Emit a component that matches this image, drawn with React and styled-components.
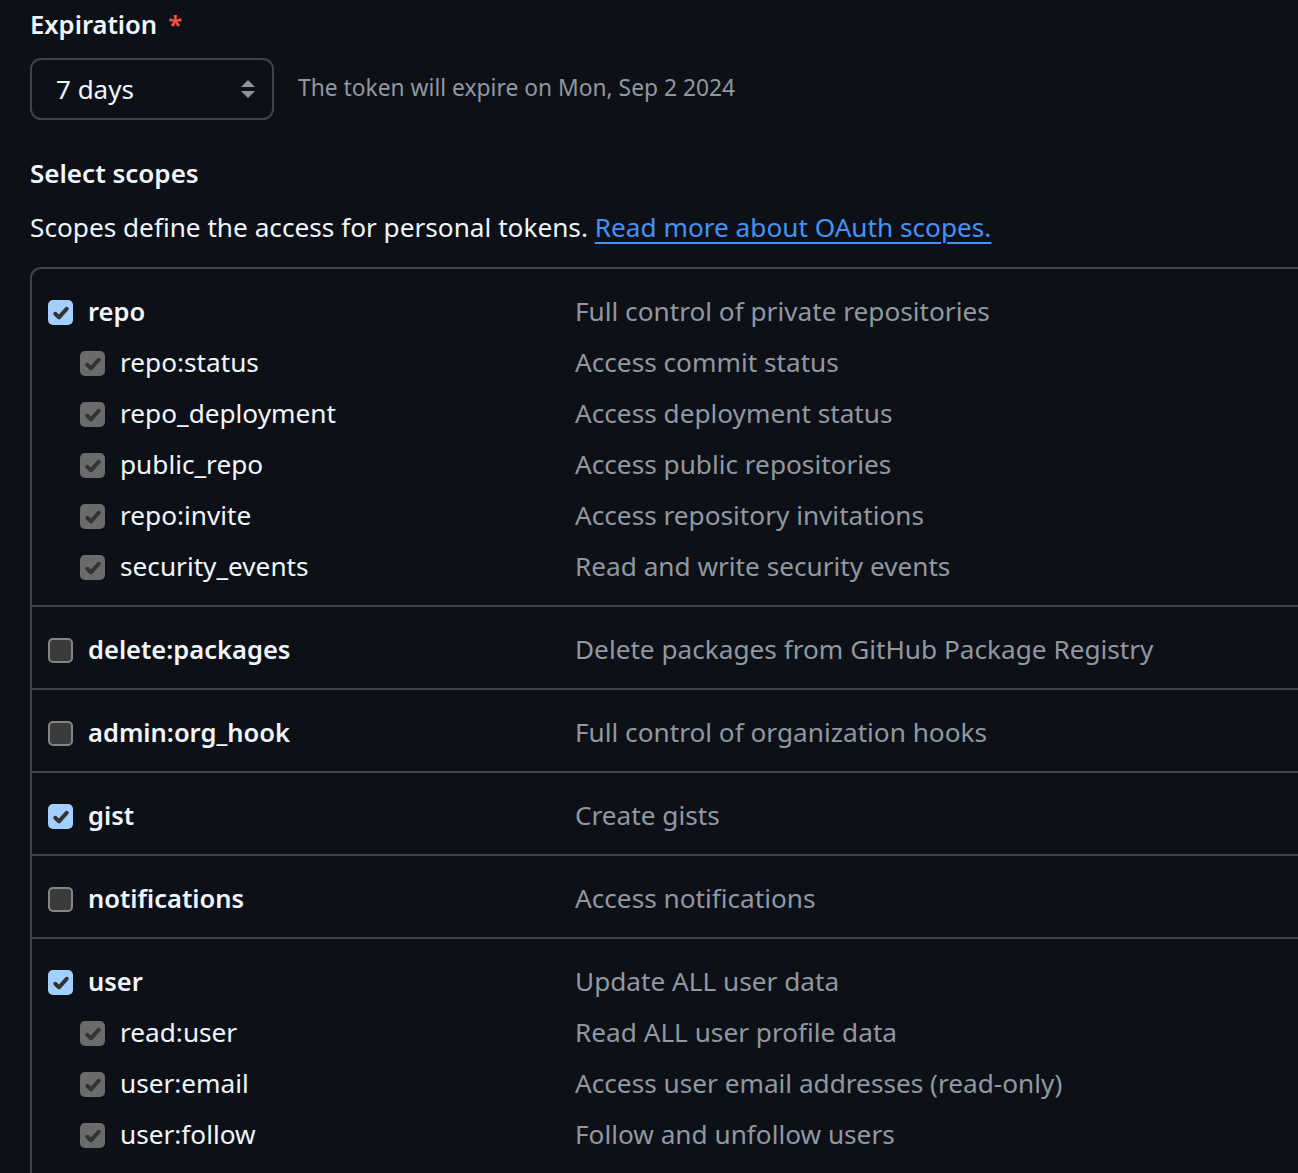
import React from 'react'
import styled, { createGlobalStyle } from 'styled-components'

const GlobalStyle = createGlobalStyle`
  html, body {
    margin: 0;
    padding: 0;
    background: #0d1117;
    overflow: hidden;
  }
  body {
    font-family: "Noto Sans", "Liberation Sans", sans-serif;
    color: #f0f6fc;
  }
`

const Page = styled.div`
  padding: 7px 0 0 30px;
  width: 1500px;
`

const Label = styled.div`
  font-size: 25.6px;
  font-weight: 600;
  line-height: 36px;
  height: 36px;
`

const Required = styled.span`
  color: #f85149;
  margin-left: 11px;
`

const ExpiryRow = styled.div`
  display: flex;
  align-items: center;
  gap: 24px;
  margin-top: 15px;
`

const SelectBox = styled.div`
  box-sizing: border-box;
  width: 244px;
  height: 62px;
  border: 2px solid #3d444d;
  border-radius: 11px;
  display: flex;
  align-items: center;
  justify-content: space-between;
  padding: 0 16px 0 24px;
  font-size: 26px;
  color: #f0f6fc;
`

const Hint = styled.span`
  font-size: 22.8px;
  color: #9198a1;
  padding-bottom: 3px;
`

const Heading = styled.div`
  font-size: 26px;
  font-weight: 600;
  line-height: 36px;
  margin-top: 35px;
`

const Lead = styled.p`
  font-size: 26.2px;
  line-height: 36px;
  margin: 18px 0 0;
`

const Link = styled.a`
  color: #4493f8;
  text-decoration: underline;
  text-underline-offset: 5px;
  text-decoration-thickness: 2px;
`

const ScopeTable = styled.div`
  margin-top: 22px;
  border-top: 2px solid #3d444d;
  border-left: 2px solid #3d444d;
  border-top-left-radius: 11px;
`

const Group = styled.div`
  padding: 18px 0 12px 16px;
  & + & {
    border-top: 2px solid #3d444d;
  }
`

const Row = styled.div`
  display: grid;
  grid-template-columns: 527px 1fr;
  align-items: center;
  height: 51px;
`

const Name = styled.div`
  display: flex;
  align-items: center;
  gap: 15px;
  padding-left: ${({ $sub }) => ($sub ? '32px' : '0')};
  font-size: ${({ $sub }) => ($sub ? '26.2px' : '25.5px')};
  font-weight: ${({ $sub }) => ($sub ? 400 : 600)};
  color: #f0f6fc;
`

const NameText = styled.span`
  padding-bottom: 3px;
`

const Desc = styled.div`
  font-size: 26.2px;
  color: #9198a1;
  padding-bottom: 3px;
`

const Box = styled.span`
  box-sizing: border-box;
  flex: none;
  width: 25px;
  height: 25px;
  border-radius: 5px;
  display: inline-flex;
  align-items: center;
  justify-content: center;
  background: ${({ $state }) =>
    $state === 'on' ? '#a3cfff' : $state === 'sub' ? '#6b6b6b' : '#3b3b3b'};
  border: ${({ $state }) => ($state === 'off' ? '2px solid #858585' : 'none')};
`

const Check = ({ state }) => (
  <Box $state={state}>
    {state !== 'off' && (
      <svg width="20" height="20" viewBox="0 0 16 16">
        <path
          d="M3.4 8.6 L6.4 11.5 L12.6 4.6"
          fill="none"
          stroke="#333"
          strokeWidth="3.2"
          strokeLinecap="round"
          strokeLinejoin="round"
        />
      </svg>
    )}
  </Box>
)

const Arrows = () => (
  <svg width="16" height="20" viewBox="0 0 16 20">
    <path d="M8 1 L15 8 L1 8 Z" fill="#8b949e" />
    <path d="M1 12 L15 12 L8 19 Z" fill="#8b949e" />
  </svg>
)

const groups = [
  {
    name: 'repo',
    desc: 'Full control of private repositories',
    on: true,
    subs: [
      ['repo:status', 'Access commit status'],
      ['repo_deployment', 'Access deployment status'],
      ['public_repo', 'Access public repositories'],
      ['repo:invite', 'Access repository invitations'],
      ['security_events', 'Read and write security events'],
    ],
  },
  { name: 'delete:packages', desc: 'Delete packages from GitHub Package Registry', on: false, subs: [] },
  { name: 'admin:org_hook', desc: 'Full control of organization hooks', on: false, subs: [] },
  { name: 'gist', desc: 'Create gists', on: true, subs: [] },
  { name: 'notifications', desc: 'Access notifications', on: false, subs: [] },
  {
    name: 'user',
    desc: 'Update ALL user data',
    on: true,
    subs: [
      ['read:user', 'Read ALL user profile data'],
      ['user:email', 'Access user email addresses (read-only)'],
      ['user:follow', 'Follow and unfollow users'],
    ],
  },
]

const App = () => (
  <>
    <GlobalStyle />
    <Page>
      <Label>
        Expiration<Required>*</Required>
      </Label>
      <ExpiryRow>
        <SelectBox>
          <span>7 days</span>
          <Arrows />
        </SelectBox>
        <Hint>The token will expire on Mon, Sep 2 2024</Hint>
      </ExpiryRow>

      <Heading>Select scopes</Heading>
      <Lead>
        Scopes define the access for personal tokens.{' '}
        <Link href="#">Read more about OAuth scopes.</Link>
      </Lead>

      <ScopeTable>
        {groups.map((g) => (
          <Group key={g.name}>
            <Row>
              <Name>
                <Check state={g.on ? 'on' : 'off'} />
                <NameText>{g.name}</NameText>
              </Name>
              <Desc>{g.desc}</Desc>
            </Row>
            {g.subs.map(([n, d]) => (
              <Row key={n}>
                <Name $sub>
                  <Check state="sub" />
                  <NameText>{n}</NameText>
                </Name>
                <Desc>{d}</Desc>
              </Row>
            ))}
          </Group>
        ))}
      </ScopeTable>
    </Page>
  </>
)

export default App
